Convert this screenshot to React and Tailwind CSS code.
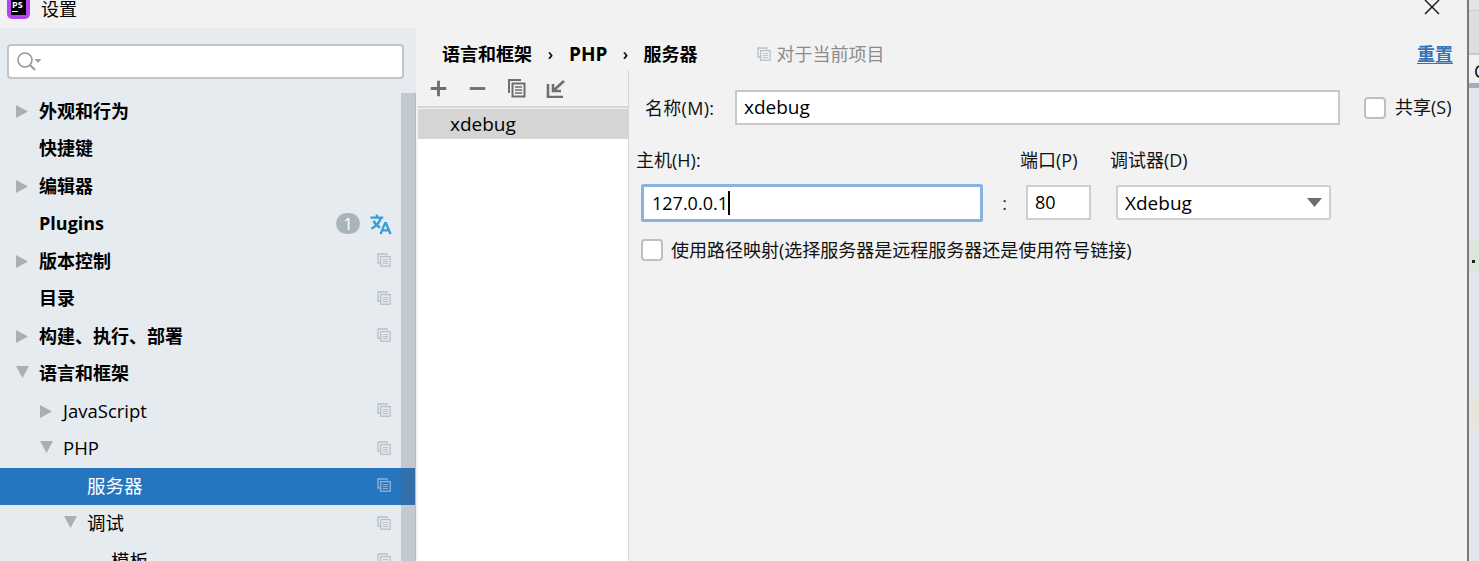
const FONT = "font-['Open_Sans','Noto_Sans_CJK_SC',sans-serif]";

function Copy({ className = "" }) {
  return (
    <svg width="14" height="14" viewBox="0 0 14 14" fill="none" stroke="currentColor" strokeWidth="1.3" className={className}>
      <path d="M10 2.6V1H1v9h2.6" />
      <rect x="3.6" y="3.6" width="9.6" height="9.6" />
      <path d="M5.6 6.6h5.6M5.6 8.6h5.6M5.6 10.6h5.6" strokeWidth="1" />
    </svg>
  );
}

function Arrow({ open }) {
  return open ? (
    <svg width="13" height="12" viewBox="0 0 13 12" className="shrink-0 -mt-[3px]">
      <path d="M0 0h13L6.5 12z" fill="#aeaeae" />
    </svg>
  ) : (
    <svg width="12" height="13" viewBox="0 0 12 13" className="shrink-0">
      <path d="M0 0l12 6.5L0 13z" fill="#aeaeae" />
    </svg>
  );
}

const rows = [
  { label: "外观和行为", arrow: "closed", bold: true },
  { label: "快捷键", bold: true },
  { label: "编辑器", arrow: "closed", bold: true },
  { label: "Plugins", bold: true, plugins: true },
  { label: "版本控制", arrow: "closed", bold: true, copy: true },
  { label: "目录", bold: true, copy: true },
  { label: "构建、执行、部署", arrow: "closed", bold: true, copy: true },
  { label: "语言和框架", arrow: "open", bold: true },
  { label: "JavaScript", arrow: "closed", level: 1, copy: true },
  { label: "PHP", arrow: "open", level: 1, copy: true },
  { label: "服务器", level: 2, copy: true, selected: true },
  { label: "调试", arrow: "open", level: 2, copy: true },
  { label: "模板", level: 3, copy: true },
];

const indents = ["pl-[16px]", "pl-[40px]", "pl-[64px]", "pl-[88px]"];

function TreeRow({ row }) {
  return (
    <div className={`flex items-center h-[37.5px] shrink-0 pr-[25px] ${indents[row.level || 0]} ${row.selected ? "bg-[#2675bf] text-white" : "text-black"}`}>
      <span className="w-[23px] shrink-0 flex items-center">{row.arrow && <Arrow open={row.arrow === "open"} />}</span>
      <span className={`leading-[24px] -mt-[1px] whitespace-nowrap ${row.bold ? "font-bold text-[18px]" : "text-[18.5px]"}`}>{row.label}</span>
      <span className="ml-auto flex items-center -mt-[2px]">
        {row.plugins && (
          <span className="flex items-center gap-[9px] -mr-[1px] mt-[2px]">
            <span className="w-[24px] h-[21px] rounded-full bg-[#a9b4bc] text-white text-[17px] leading-[21px] text-center font-normal">1</span>
            <svg width="23" height="22" viewBox="0 0 24 24" fill="none" stroke="#389fd6" strokeWidth="2.6">
              <path d="M1 5h14M8 2v3M12.5 5C11 10 7 14.5 2 17M4.5 8.5c1.5 3.5 4 6 7 7.5" />
              <path d="M12 23l5-12h1l5 12M14 19h7.5" />
            </svg>
          </span>
        )}
        {row.copy && <Copy className={row.selected ? "text-[#8fb4d8]" : "text-[#b9c0c6]"} />}
      </span>
    </div>
  );
}

function Checkbox() {
  return <span className="w-[22px] h-[22px] shrink-0 rounded-[4px] bg-white border-2 border-[#bfbfbf]" />;
}

function Sidebar() {
  return (
    <aside className="w-[416px] shrink-0 bg-[#e6ebf0] flex flex-col overflow-hidden">
      <div className="pt-[16px] pl-[7px] pr-[12px] pb-[13.5px] shrink-0">
        <div className="h-[35px] bg-white rounded-[4px] border-2 border-[#c4c4c4] flex items-center pl-[7px]">
          <svg width="25" height="22" viewBox="0 0 25 22" fill="none" stroke="#8f9ba3" strokeWidth="1.6">
            <circle cx="9" cy="9" r="7" />
            <path d="M14 14l5 5" strokeWidth="2" />
            <path d="M18.5 8h7l-3.5 4z" fill="#a0a0a0" stroke="none" />
          </svg>
        </div>
      </div>
      <div className="flex-1 flex flex-col min-h-0 relative">
        {rows.map((row) => (
          <TreeRow key={row.label} row={row} />
        ))}
        <div className="absolute top-[0.5px] bottom-0 right-0 w-[15px] bg-[#5a6470]/25 border-r border-r-[#b9bcc0]" />
      </div>
    </aside>
  );
}

function ServerList() {
  return (
    <div className="w-[211px] shrink-0 flex flex-col border-r border-[#d5d5d5]">
      <div className="h-[36px] flex items-center gap-[20px] pl-[11px] text-[#6e6e6e] shrink-0">
        <svg width="19" height="19" viewBox="0 0 16 16" fill="none" stroke="currentColor" strokeWidth="2.4"><path d="M8 1.5v13M1.5 8h13" /></svg>
        <svg width="19" height="19" viewBox="0 0 16 16" fill="none" stroke="currentColor" strokeWidth="2.4"><path d="M1.5 8h13" /></svg>
        <svg width="19" height="20" viewBox="0 0 19 20" fill="none" stroke="currentColor" strokeWidth="2"><path d="M14 2H2v13" /><rect x="5.5" y="5.5" width="12" height="13" /><path d="M8 9h7M8 12h7M8 15h7" strokeWidth="1.6" /></svg>
        <svg width="19" height="19" viewBox="0 0 19 19" fill="none" stroke="currentColor" strokeWidth="2.6"><path d="M2 5v13h15" /><path d="M18 2L8 11" /><path d="M7 5v7h8" /></svg>
      </div>
      <div className="h-[2px] bg-[#d5d5d5] shrink-0 mb-[1px]" />
      <div className="h-[30px] bg-[#d5d5d5] pl-[32px] text-[19px] leading-[30px] text-black shrink-0">xdebug</div>
      <div className="flex-1 bg-white" />
    </div>
  );
}

function ServerForm() {
  return (
    <div className="flex-1 min-w-0 pl-[9px] pr-[14px] pt-[20px] text-[18px] text-[#111]">
      <div className="flex items-center h-[35px] pl-[7px]">
        <span className="w-[90px] shrink-0 leading-[24px] tracking-[0.3px]">名称(M):</span>
        <div className="w-[605px] h-[35px] bg-white border-2 border-[#c8c8c8] pl-[7px] text-[19px] leading-[30px] text-black">xdebug</div>
        <span className="ml-[24px] flex items-center gap-[9px] whitespace-nowrap">
          <Checkbox />
          <span>共享(S)</span>
        </span>
      </div>
      <div className="flex h-[24px] mt-[23px] -ml-[2px] leading-[24px]">
        <span className="w-[384px]">主机(H):</span>
        <span className="w-[90px]">端口(P)</span>
        <span>调试器(D)</span>
      </div>
      <div className="flex items-center h-[38px] mt-[11.5px] leading-[24px] text-black">
        <div className="ml-[3px] w-[342px] h-[38px] bg-white border-[3px] border-[#8ab2e0] rounded-[2px] pl-[8px] flex items-center">
          <span>127.0.0.1</span>
          <span className="w-[2px] h-[24px] bg-black" />
        </div>
        <span className="w-[43px] text-center text-[#333]">:</span>
        <div className="w-[65px] h-[35px] bg-white border-2 border-[#cfcfcf] pl-[7px] leading-[30px]">80</div>
        <div className="ml-[25px] w-[215px] h-[35px] bg-white border-2 border-[#cfcfcf] rounded-[3px] pl-[7px] pr-[7px] flex items-center justify-between">
          <span className="text-[19px]">Xdebug</span>
          <svg width="15" height="9" viewBox="0 0 15 9"><path d="M0 0h15L7.5 9z" fill="#6e6e6e" /></svg>
        </div>
      </div>
      <div className="flex items-center gap-[8px] mt-[16.5px] pl-[3px] h-[24px] whitespace-nowrap">
        <Checkbox />
        <span>使用路径映射(选择服务器是远程服务器还是使用符号链接)</span>
      </div>
    </div>
  );
}

// sliver of the window behind the dialog
function BackWindow() {
  return (
    <div className="flex-1 border-l-2 border-[#7a7a7a] flex flex-col overflow-hidden">
      <div className="h-[11px] bg-[#e4e4e4] border-b border-[#cfcfcf] shrink-0" />
      <div className="h-[44px] bg-[#dedede] border-b-2 border-[#c9c9c9] shrink-0" />
      <div className="h-[28px] bg-[#f1f1f1] shrink-0 flex items-end pl-[5px] text-[18px] leading-[24px] text-black">C</div>
      <div className="h-[5px] bg-[#a3adba] shrink-0" />
      <div className="h-[152px] bg-[#e3e6ea] shrink-0" />
      <div className="h-[32px] bg-[#d9e7d9] shrink-0 flex items-center pl-[3px]">
        <span className="w-[3px] h-[3px] mt-[10px] bg-[#222]" />
      </div>
      <div className="h-[126px] bg-[#e3e6ea] shrink-0" />
      <div className="h-[31px] bg-[#e8e6da] shrink-0" />
      <div className="flex-1 bg-[#e3e6ea]" />
    </div>
  );
}

export default function App() {
  return (
    <div className={`${FONT} w-[1479px] h-[561px] overflow-hidden flex bg-[#f2f2f2]`}>
      <div className="w-[1467px] shrink-0 flex flex-col">
        <header className="h-[28px] shrink-0 flex items-center pl-[7px] relative">
          <span className="w-[23px] h-[19px] -mt-[9px] shrink-0 bg-[#b345f1] rounded-b-[5px] px-[4px] flex">
            <span className="w-[15px] h-[15px] bg-black text-white text-[9px] leading-[9px] font-bold pl-[1px] flex flex-col">
              PS
              <span className="w-[6px] h-[1px] bg-white mt-[2px]" />
            </span>
          </span>
          <span className="ml-[11px] text-[18px] leading-[18px] -mt-[10px] text-black">设置</span>
          <svg width="16" height="16" viewBox="0 0 16 16" stroke="#111" strokeWidth="1.4" className="absolute left-[1424px] top-0">
            <path d="M1 0l14 14M15 0L1 14" />
          </svg>
        </header>
        <div className="flex-1 flex min-h-0">
          <Sidebar />
          <main className="flex-1 min-w-0 flex flex-col ml-[2px]">
            <div className="h-[42px] shrink-0 flex items-center pt-[10px] pl-[24px] pr-[14px] text-[18px] text-black">
              <span className="font-bold">语言和框架</span>
              <span className="w-[37px] text-center text-[16px] font-semibold">›</span>
              <span className="font-bold text-[19px]">PHP</span>
              <span className="w-[36px] text-center text-[16px] font-semibold">›</span>
              <span className="font-bold">服务器</span>
              <Copy className="ml-[60px] text-[#b9c0c6]" />
              <span className="ml-[5px] text-[#8c8c8c]">对于当前项目</span>
              <span className="ml-auto font-bold text-[#3574b8] underline underline-offset-2">重置</span>
            </div>
            <div className="flex-1 flex min-h-0">
              <ServerList />
              <ServerForm />
            </div>
          </main>
        </div>
      </div>
      <BackWindow />
    </div>
  );
}
